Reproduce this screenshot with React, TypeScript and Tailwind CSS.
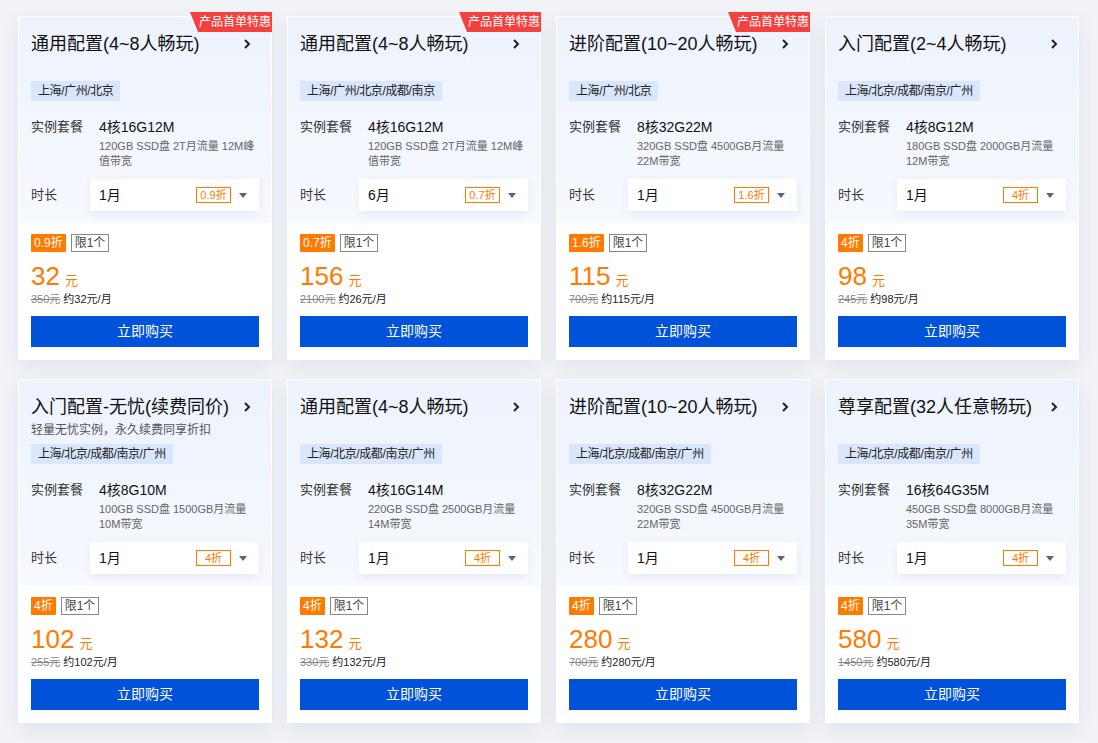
import React from "react";

type Plan = {
  title: string;
  sub?: string;
  hot?: boolean;
  region: string;
  spec: string;
  desc: string;
  month: string;
  off: string;
  price: string;
  orig: string;
  per: string;
};

const plans: Plan[] = [
  { title: "通用配置(4~8人畅玩)", hot: true, region: "上海/广州/北京", spec: "4核16G12M", desc: "120GB SSD盘 2T月流量 12M峰值带宽", month: "1月", off: "0.9折", price: "32", orig: "350元", per: "约32元/月" },
  { title: "通用配置(4~8人畅玩)", hot: true, region: "上海/广州/北京/成都/南京", spec: "4核16G12M", desc: "120GB SSD盘 2T月流量 12M峰值带宽", month: "6月", off: "0.7折", price: "156", orig: "2100元", per: "约26元/月" },
  { title: "进阶配置(10~20人畅玩)", hot: true, region: "上海/广州/北京", spec: "8核32G22M", desc: "320GB SSD盘 4500GB月流量 22M带宽", month: "1月", off: "1.6折", price: "115", orig: "700元", per: "约115元/月" },
  { title: "入门配置(2~4人畅玩)", region: "上海/北京/成都/南京/广州", spec: "4核8G12M", desc: "180GB SSD盘 2000GB月流量 12M带宽", month: "1月", off: "4折", price: "98", orig: "245元", per: "约98元/月" },
  { title: "入门配置-无忧(续费同价)", sub: "轻量无忧实例，永久续费同享折扣", region: "上海/北京/成都/南京/广州", spec: "4核8G10M", desc: "100GB SSD盘 1500GB月流量 10M带宽", month: "1月", off: "4折", price: "102", orig: "255元", per: "约102元/月" },
  { title: "通用配置(4~8人畅玩)", region: "上海/北京/成都/南京/广州", spec: "4核16G14M", desc: "220GB SSD盘 2500GB月流量 14M带宽", month: "1月", off: "4折", price: "132", orig: "330元", per: "约132元/月" },
  { title: "进阶配置(10~20人畅玩)", region: "上海/北京/成都/南京/广州", spec: "8核32G22M", desc: "320GB SSD盘 4500GB月流量 22M带宽", month: "1月", off: "4折", price: "280", orig: "700元", per: "约280元/月" },
  { title: "尊享配置(32人任意畅玩)", region: "上海/北京/成都/南京/广州", spec: "16核64G35M", desc: "450GB SSD盘 8000GB月流量 35M带宽", month: "1月", off: "4折", price: "580", orig: "1450元", per: "约580元/月" },
];

function PlanCard({ p }: { p: Plan }) {
  return (
    <div className="relative flex flex-col bg-white border border-white shadow-[0_6px_18px_rgba(20,45,100,0.08)]">
      {p.hot && (
        <div className="absolute -top-[5px] -right-px h-[20px] w-[82px] whitespace-nowrap bg-[#f5413d] text-white text-[12px] leading-[20px] pl-[9px] [clip-path:polygon(0_0,100%_0,100%_100%,8px_100%)]">
          产品首单特惠
        </div>
      )}

      {/* top */}
      <div className="bg-linear-to-b from-[#edf2fc] to-[#f6f9fe] px-[12px] pt-[14px] pb-[12px]">
        <div className="h-[47px]">
          <div className="flex items-center justify-between h-[26px]">
            <span className="text-[18px] text-[#111]">{p.title}</span>
            <svg width="8" height="12" viewBox="0 0 8 12" className="mr-[8px]">
              <polyline points="2,2 6,6 2,10" fill="none" stroke="#222" strokeWidth="2" />
            </svg>
          </div>
          {p.sub && <div className="text-[12px] leading-[16px] text-[#555] mt-[2px]">{p.sub}</div>}
        </div>
        <div className="inline-block h-[20px] leading-[20px] px-[7px] bg-[#dae6fc] text-[12px] text-[#222] tracking-[-0.4px]">
          {p.region}
        </div>

        <div className="flex mt-[16px]">
          <div className="w-[68px] text-[13px] text-[#333] leading-[18px]">实例套餐</div>
          <div className="flex-1">
            <div className="text-[14px] leading-[18px] text-[#111]">{p.spec}</div>
            <div className="text-[11px] leading-[15px] text-[#666] mt-[3px] pr-[2px]">{p.desc}</div>
          </div>
        </div>

        <div className="flex items-center mt-[10px]">
          <div className="w-[59px] text-[13px] text-[#333]">时长</div>
          <div className="flex-1 h-[32px] bg-white flex items-center pl-[9px] pr-[12px] shadow-[0_3px_10px_rgba(20,50,110,0.07)]">
            <span className="flex-1 text-[14px] text-[#111]">{p.month}</span>
            <span className="w-[35px] h-[16px] border border-[#ff7a00] text-[#ff7a00] text-[11px] leading-[14px] text-center">
              {p.off}
            </span>
            <svg width="8" height="5" viewBox="0 0 8 5" className="ml-[8px]">
              <polygon points="0,0 8,0 4,5" fill="#5b6575" />
            </svg>
          </div>
        </div>
      </div>

      {/* bottom */}
      <div className="px-[12px] pt-[11px] pb-[12px]">
        <div className="flex items-center gap-[5px]">
          <span className="h-[18px] px-[3px] bg-[#ff7a00] text-white text-[12px] leading-[18px] rounded-[1px]">{p.off}</span>
          <span className="h-[18px] px-[3px] border border-[#888] text-[#444] text-[12px] leading-[16px]">限1个</span>
        </div>
        <div className="flex items-baseline mt-[10px] h-[28px] leading-[28px]">
          <span className="text-[26px] text-[#ff7a00]">{p.price}</span>
          <span className="text-[13px] text-[#ff7a00] ml-[5px]">元</span>
        </div>
        <div className="flex items-center mt-[1px] h-[16px] text-[11px]">
          <span className="line-through text-[#888]">{p.orig}</span>
          <span className="ml-[3px] text-[#222]">{p.per}</span>
        </div>
        <button className="mt-[9px] w-full h-[31px] bg-[#0052d9] text-white text-[14px]">立即购买</button>
      </div>
    </div>
  );
}

export default function App() {
  return (
    <div className="min-h-screen bg-[#f1f3f7] pt-[16px] pl-[18px] font-['Liberation_Sans','Noto_Sans_CJK_SC',sans-serif]">
      <div className="grid grid-cols-[repeat(4,254px)] gap-x-[15px] gap-y-[19px]">
        {plans.map((p, i) => (
          <PlanCard key={i} p={p} />
        ))}
      </div>
    </div>
  );
}
